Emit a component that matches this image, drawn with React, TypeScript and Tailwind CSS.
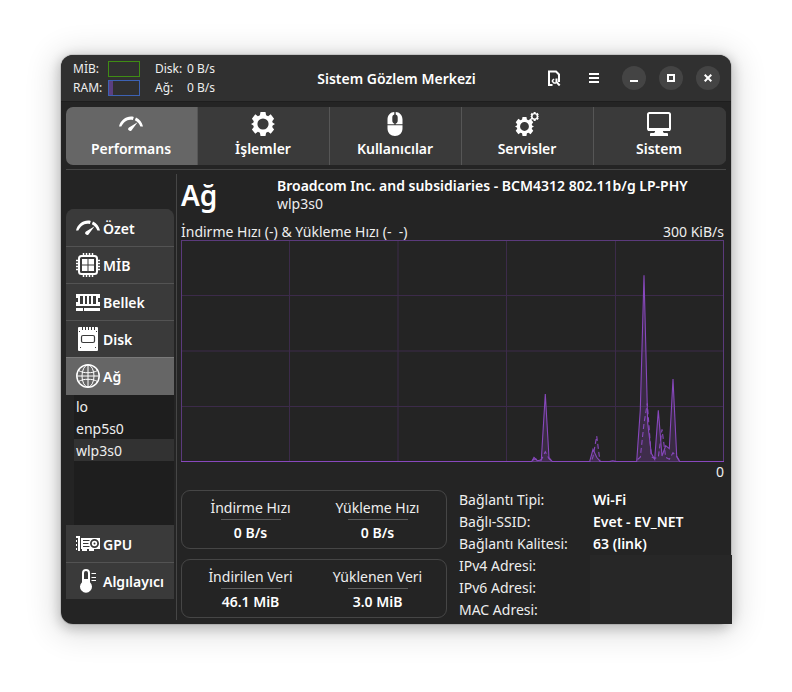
import React from "react";

type IconProps = { className?: string };

function GaugeIcon({ className = "size-6" }: IconProps) {
  return (
    <svg viewBox="0 0 24 24" className={className} fill="currentColor" aria-hidden="true">
      <path d="M0 14.5C1.5 8.5 6.5 4.6 12 4.6c1 0 2 .1 2.8.3L13.9 8C8.500 6.600 4.500 9.800 2.300 14.600Z" />
      <path d="M17 5.600c3.600 1.600 6 5 7 8.900h-2.600c-.9-2.400-2.500-4.700-5.600-6.200Z" />
      <path d="M18.600 10.300 13.200 17.600a2 2 0 1 1-3.200-2.200Z" />
    </svg>
  );
}

const gearPath =
  "M9.500 0h5l.6 3.300 2 .9 2.600-1.900 3.400 4.400-1.900 2.500.5 1.600L24 12l-2.300 1.400-.5 1.500 1.900 2.500-3.400 4.300-2.600-1.900-2 .9-.6 3.300h-5l-.6-3.300-2-.9-2.600 1.900-3.400-4.300 1.900-2.500-.5-1.500L0 12l2.300-1.200.5-1.600L.9 6.700l3.400-4.400 2.600 1.900 2-.9ZM12 6.400a5.600 5.600 0 1 0 0 11.200 5.600 5.600 0 0 0 0-11.200Z";

function GearIcon() {
  return (
    <svg viewBox="0 0 24 24" className="size-6" fill="currentColor" fillRule="evenodd" aria-hidden="true">
      <path d={gearPath} />
    </svg>
  );
}

function GearsIcon() {
  return (
    <svg viewBox="0 0 24 24" className="size-6" fill="currentColor" fillRule="evenodd" aria-hidden="true">
      <path d={gearPath} transform="translate(0 5) scale(.79)" />
      <path d={gearPath} transform="translate(15.200 0) scale(.37)" />
    </svg>
  );
}

function MouseIcon() {
  return (
    <svg viewBox="0 0 24 24" className="size-6" fill="currentColor" aria-hidden="true">
      <path d="M11.300 0v2.500C10 2.800 9.300 4 9.300 5.500v3c0 1.700.8 2.700 2 3v.7H4.500V7.500C4.500 3 7.500.2 11.300 0ZM12.700 0v2.500c1.300.3 2 1.500 2 3v3c0 1.700-.8 2.700-2 3v.7h6.800V7.500C19.500 3 16.500.2 12.700 0ZM4.500 13.200h15v3.300c0 4.500-3.200 7.500-7.500 7.500s-7.500-3-7.500-7.500Z" />
    </svg>
  );
}

function MonitorIcon() {
  return (
    <svg viewBox="0 0 24 24" className="size-6" aria-hidden="true">
      <rect x="1" y="1" width="22" height="17" rx="1.500" fill="none" stroke="currentColor" strokeWidth="2" />
      <path d="M1 16h22v3H1ZM8 18h8v2l1 1h3a1 1 0 0 1 1 1v2H3v-2a1 1 0 0 1 1-1h3l1-1Z" fill="currentColor" />
    </svg>
  );
}

function CpuIcon() {
  return (
    <svg viewBox="0 0 24 24" className="size-6" fill="none" stroke="currentColor" aria-hidden="true">
      <rect x="3" y="3" width="18" height="18" rx="2.500" strokeWidth="2" />
      <path d="M7.500 0v3M10.500 0v3M13.500 0v3M16.500 0v3M7.500 21v3M10.500 21v3M13.500 21v3M16.500 21v3M0 7.500h3M0 10.500h3M0 13.500h3M0 16.500h3M21 7.500h3M21 10.500h3M21 13.500h3M21 16.500h3" strokeWidth="1.500" />
      <path d="M6 6h5.500v5.500H6ZM12.500 6H18v5.500h-5.500ZM6 12.500h5.500V18H6ZM12.500 12.500H18V18h-5.500Z" fill="currentColor" stroke="none" />
    </svg>
  );
}

function MemoryIcon() {
  return (
    <svg viewBox="0 0 24 24" className="size-6" fill="currentColor" fillRule="evenodd" aria-hidden="true">
      <path d="M0 4h24v4h-2v4h2v4H0v-4h2V8H0ZM4 6v8h3V6ZM9 6v8h2V6ZM13 6v8h2V6ZM17 6v8h3V6ZM0 18h7v3H0ZM8 18h16v3H8Z" />
    </svg>
  );
}

function DiskIcon() {
  return (
    <svg viewBox="0 0 24 24" className="size-6" aria-hidden="true">
      <path d="M2 1a1 1 0 0 1 1-1h3v3h1V0h2v3h1V0h2v3h1V0h2v3h1V0h2v3h1V0h2a1 1 0 0 1 1 1v22a1 1 0 0 1-1 1H3a1 1 0 0 1-1-1Z" fill="currentColor" />
      <rect x="5.500" y="8.500" width="13" height="7" rx="1.500" fill="none" stroke="#3a3a3a" strokeWidth="1.200" />
      <path d="M3 4h1v1H3ZM20 4h1v1h-1ZM4 20h1v1H4ZM19 20h1v1h-1Z" fill="#3a3a3a" />
    </svg>
  );
}

function GlobeIcon() {
  return (
    <svg viewBox="0 0 24 24" className="size-6" fill="none" stroke="currentColor" aria-hidden="true">
      <circle cx="12" cy="12" r="11.200" strokeWidth="1.500" />
      <ellipse cx="12" cy="12" rx="6" ry="11" strokeWidth="1" />
      <path d="M12 1v22M1 12h22M2.500 6.500c5 3 14 3 19 0M2.500 17.500c5-3 14-3 19 0" strokeWidth="1" />
    </svg>
  );
}

function GpuIcon() {
  return (
    <svg viewBox="0 0 24 24" className="size-6" aria-hidden="true">
      <path d="M0 4h4v15H2V6H0ZM0 8h1v2H0ZM0 12h1v2H0ZM0 16h1v2H0ZM5 6h19v11H5ZM6 17h5v2H6ZM13 17h5v2h-5Z" fill="currentColor" />
      <path d="M7 8.500h6.500M7 11.500h5.500M7 14.500h6.500" stroke="#3a3a3a" strokeWidth="1" />
      <circle cx="18.500" cy="11.500" r="3.600" fill="none" stroke="#3a3a3a" strokeWidth="1.800" />
      <circle cx="18.500" cy="11.500" r="1" fill="#3a3a3a" />
    </svg>
  );
}

function ThermometerIcon() {
  return (
    <svg viewBox="0 0 24 24" className="size-6" aria-hidden="true">
      <path d="M6 4a4 4 0 0 1 8 0v9.200a6 6 0 1 1-8 0Z" fill="currentColor" />
      <path d="M8 10V4a2 2 0 0 1 4 0v6Z" fill="#3a3a3a" />
      <path d="M15.500 4.500H20M15.500 8.500H20M15.500 11.500H20" stroke="currentColor" strokeWidth="1.200" />
    </svg>
  );
}

const tabs = [
  { label: "Performans", Icon: GaugeIcon, active: true },
  { label: "İşlemler", Icon: GearIcon },
  { label: "Kullanıcılar", Icon: MouseIcon },
  { label: "Servisler", Icon: GearsIcon },
  { label: "Sistem", Icon: MonitorIcon },
];

const devices = ["lo", "enp5s0", "wlp3s0"];

function SideButton({ label, Icon, active = false }: { label: string; Icon: React.ComponentType<IconProps>; active?: boolean }) {
  return (
    <button
      type="button"
      aria-pressed={active}
      className={
        "flex h-[37px] w-full items-center gap-[3px] border-t pl-[10px] text-left font-semibold " +
        (active ? "border-[#7a7a7a] bg-[#666666]" : "border-[#535353] bg-[#3a3a3a] first:border-[#3a3a3a]")
      }
    >
      <Icon />
      {label}
    </button>
  );
}

function Stat({ label, value }: { label: string; value: string }) {
  return (
    <div className="flex flex-col items-center">
      <dt className="leading-[22px]">{label}</dt>
      <dd className="flex flex-col items-center font-semibold leading-[25px] text-white">
        <span className="h-px w-[60px] bg-[#5c5c5c]" />
        {value}
      </dd>
    </div>
  );
}

function StatCard({ items }: { items: [string, string][] }) {
  return (
    <dl className="grid h-[59px] grid-cols-2 rounded-[9px] border border-[#464646] px-[5px] pt-[6px]">
      {items.map(([label, value]) => (
        <Stat key={label} label={label} value={value} />
      ))}
    </dl>
  );
}

const download =
  "0,221.5 350.7,221.5 353,217.3 356.3,220.7 360.3,220 364.3,154 368,217.7 371.3,221.5 408.7,221.5 412,209.3 415.7,217.3 419.3,221.5 428.3,221.5 431.7,220.7 435.7,221.5 455.7,221.5 459.3,170 463,35.3 466.7,183.3 470.3,213.3 473.7,219.3 477.3,170.3 481,216 484.7,205.7 488.3,208.7 492,139 495.7,216 498.7,221.5 543,221.5";
const upload =
  "0,221.5 350.7,221.5 353,219 360.3,220 364.3,211.7 368,218.7 371.3,221.5 410.3,221.5 412,216.7 415.7,196 419,221.5 454,221.5 459.3,217.3 463,183.3 466.3,163.3 470.3,216.7 473.7,218.3 477.3,217.3 481,189.3 484.7,217.3 488.3,219.3 492,212.7 495.7,216.7 498.7,221.5 543,221.5";

function SpeedChart() {
  return (
    <svg viewBox="0 0 543 222" preserveAspectRatio="none" className="block h-[222px] w-full" role="img" aria-label="İndirme ve yükleme hızı">
      <path d="M108.500 0V222M217 0V222M325.500 0V222M434.500 0V222M0 55.500H543M0 111H543M0 166.500H543" stroke="#3c2b4a" fill="none" />
      <rect x="0.500" y="0.500" width="542" height="221" fill="none" stroke="#5b3a7c" />
      <polygon points={download} fill="#8f4bc4" fillOpacity="0.200" />
      <polygon points={upload} fill="#8f4bc4" fillOpacity="0.080" />
      <polyline points={download} fill="none" stroke="#8848bd" strokeWidth="1.100" />
      <polyline points={upload} fill="none" stroke="#8848bd" strokeWidth="1.100" strokeDasharray="5 3" />
    </svg>
  );
}

const details: [string, string][] = [
  ["Bağlantı Tipi:", "Wi-Fi"],
  ["Bağlı-SSID:", "Evet - EV_NET"],
  ["Bağlantı Kalitesi:", "63 (link)"],
  ["IPv4 Adresi:", ""],
  ["IPv6 Adresi:", ""],
  ["MAC Adresi:", ""],
];

const windowButton = "flex size-6 items-center justify-center rounded-full bg-[#444444]";

export default function App() {
  return (
    <div className="min-h-screen bg-white px-[61px] pt-[55px] pb-[68px] font-['Noto_Sans',sans-serif] text-[14px] text-white">
      <div className="relative rounded-[12px] bg-[#242424] shadow-[0_0_0_1px_rgba(0,0,0,0.1),0_3px_12px_2px_rgba(0,0,0,0.2),0_4px_30px_8px_rgba(0,0,0,0.12)]">
        <header className="grid h-[47px] grid-cols-[1fr_auto_1fr] items-center rounded-t-[12px] border-b border-[#1e1e1e] bg-[#303030] pr-[11px] pl-3">
          <div className="grid grid-cols-[35px_47px_32px_auto] items-center justify-start gap-y-[3px] text-[12px] leading-4 text-[#eeeeee]">
            <span>MİB:</span>
            <span className="h-4 w-8 border border-[#3f8c14]" />
            <span>Disk:</span>
            <span>0 B/s</span>
            <span>RAM:</span>
            <span className="h-4 w-8 border border-[#3d62b3]">
              <span className="block h-full w-1 bg-[#5b3f80]" />
            </span>
            <span>Ağ:</span>
            <span>0 B/s</span>
          </div>
          <h1 className="font-semibold">Sistem Gözlem Merkezi</h1>
          <div className="flex items-center justify-end gap-[13px]">
            <div className="flex gap-4 pr-[3px]">
              <button type="button" aria-label="Ara" className="flex size-6 items-center justify-center">
                <svg viewBox="0 0 16 16" className="size-4" fill="none" stroke="currentColor" aria-hidden="true">
                  <path d="M6.500 15H3V1.500h7L13 4.500V12" strokeWidth="2" />
                  <path d="M6.500 12V10.500L8 9M6.500 11.500 8 13h2" strokeWidth="1.500" />
                  <path d="M10.500 8.500V12L13.700 15.500" strokeWidth="2" />
                </svg>
              </button>
              <button type="button" aria-label="Menü" className="flex size-6 items-center justify-center">
                <svg viewBox="0 0 10 10" className="size-[10px]" fill="currentColor" aria-hidden="true">
                  <path d="M0 0h10v2H0ZM0 4h10v2H0ZM0 8h10v2H0Z" />
                </svg>
              </button>
            </div>
            <button type="button" aria-label="Küçült" className={windowButton}>
              <svg viewBox="0 0 8 8" className="size-2" aria-hidden="true">
                <path d="M0 6h8v2H0Z" fill="currentColor" />
              </svg>
            </button>
            <button type="button" aria-label="Büyüt" className={windowButton}>
              <svg viewBox="0 0 8 8" className="size-2" aria-hidden="true">
                <rect x="1" y="1" width="6" height="6" fill="none" stroke="currentColor" strokeWidth="2" />
              </svg>
            </button>
            <button type="button" aria-label="Kapat" className={windowButton}>
              <svg viewBox="0 0 8 8" className="size-2" aria-hidden="true">
                <path d="m.7.7 6.600 6.600M7.300.7.700 7.300" stroke="currentColor" strokeWidth="2" />
              </svg>
            </button>
          </div>
        </header>

        <div className="px-[5px] pt-[5px] pb-1">
          <nav className="grid grid-cols-5 overflow-hidden rounded-[7px]">
            {tabs.map(({ label, Icon, active }) => (
              <button
                key={label}
                type="button"
                aria-pressed={!!active}
                className={
                  "flex h-[58px] flex-col items-center border-r border-[#565656] pt-[5px] pr-px font-semibold last:border-[#3a3a3a] " +
                  (active ? "bg-[#666666]" : "bg-[#3a3a3a]")
                }
              >
                <Icon />
                <span className="leading-[26px]">{label}</span>
              </button>
            ))}
          </nav>

          <div className="mt-1 flex border-t border-[#464646] pt-1">
            <aside className="w-[108px] shrink-0 pt-[35px]">
              <div className="overflow-hidden rounded-t-[8px]">
                <SideButton label="Özet" Icon={GaugeIcon} />
                <SideButton label="MİB" Icon={CpuIcon} />
                <SideButton label="Bellek" Icon={MemoryIcon} />
                <SideButton label="Disk" Icon={DiskIcon} />
                <SideButton label="Ağ" Icon={GlobeIcon} active />
              </div>
              <div className="border-t border-[#666666]">
                <ul className="ml-2 h-[130px] bg-[#1e1e1e] text-[#eeeeee]">
                  {devices.map((name) => (
                    <li key={name}>
                      <button
                        type="button"
                        className={
                          "h-[22px] w-full pl-[2px] text-left leading-6 " +
                          (name === "wlp3s0" ? "bg-[#323232]" : "")
                        }
                      >
                        {name}
                      </button>
                    </li>
                  ))}
                </ul>
              </div>
              <div>
                <SideButton label="GPU" Icon={GpuIcon} />
                <SideButton label="Algılayıcı" Icon={ThermometerIcon} />
              </div>
            </aside>

            <main className="ml-[2px] min-w-0 flex-1 border-l border-[#464646] pr-[2px] pb-[2px] pl-1 text-[#eeeeee]">
              <div className="flex h-[49px] items-start">
                <h2 className="w-24 text-[28px] leading-[42px] font-semibold text-white">Ağ</h2>
                <div className="pt-[3px] leading-[18px]">
                  <p className="font-semibold text-white">Broadcom Inc. and subsidiaries - BCM4312 802.11b/g LP-PHY</p>
                  <p>wlp3s0</p>
                </div>
              </div>
              <div className="flex justify-between leading-[17px]">
                <span className="whitespace-pre">İndirme Hızı (-) &amp; Yükleme Hızı (-  -)</span>
                <span>300 KiB/s</span>
              </div>
              <SpeedChart />
              <div className="text-right leading-5">0</div>
              <div className="mt-2 flex gap-3">
                <div className="flex w-[266px] flex-col gap-[10px]">
                  <StatCard items={[["İndirme Hızı", "0 B/s"], ["Yükleme Hızı", "0 B/s"]]} />
                  <StatCard items={[["İndirilen Veri", "46.1 MiB"], ["Yüklenen Veri", "3.0 MiB"]]} />
                </div>
                <dl className="-mt-px grid h-32 grid-cols-[134px_auto] content-start leading-[22px]">
                  {details.map(([label, value]) => (
                    <React.Fragment key={label}>
                      <dt>{label}</dt>
                      <dd className="font-semibold text-white">{value}</dd>
                    </React.Fragment>
                  ))}
                </dl>
              </div>
            </main>
          </div>
        </div>

        <div className="absolute -right-px bottom-0 h-[69px] w-[142px] bg-[#272727]" />
      </div>
    </div>
  );
}
